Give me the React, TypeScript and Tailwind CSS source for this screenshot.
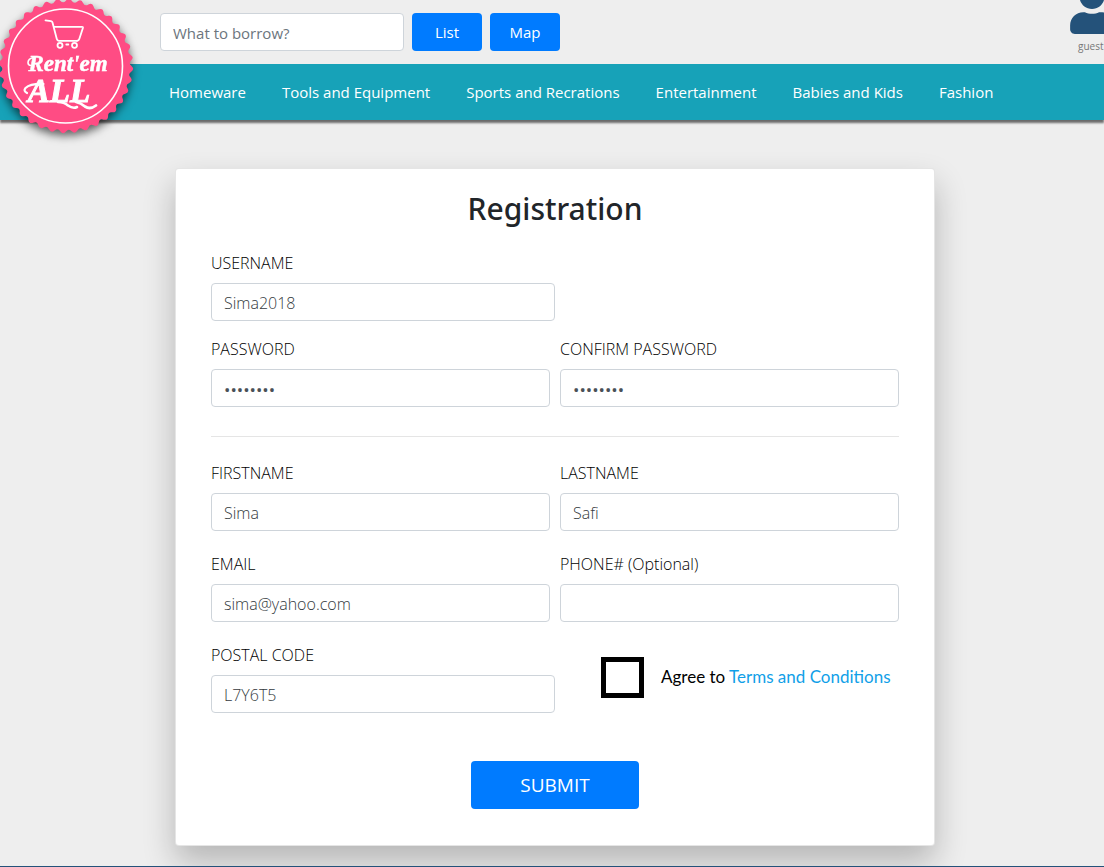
import { FaUser } from "react-icons/fa";

const categories = [
  "Homeware",
  "Tools and Equipment",
  "Sports and Recrations",
  "Entertainment",
  "Babies and Kids",
  "Fashion",
];

const CENTER = 66;

function sealPath(teeth: number, outer: number, inner: number) {
  const middle = (outer + inner) / 2;
  const point = (radius: number, angle: number) =>
    `${(CENTER + radius * Math.cos(angle)).toFixed(2)} ${(CENTER + radius * Math.sin(angle)).toFixed(2)}`;
  const step = (Math.PI * 2) / teeth;
  let d = `M${point(middle, 0)}`;
  for (let i = 0; i < teeth; i++) {
    const a = i * step;
    d += `Q${point(outer, a + step * 0.25)} ${point(middle, a + step * 0.5)}`;
    d += `Q${point(inner, a + step * 0.75)} ${point(middle, a + step)}`;
  }
  return d + "Z";
}

function Logo() {
  return (
    <svg
      viewBox="0 0 134 134"
      className="size-[134px] drop-shadow-[0_4px_4px_rgba(0,0,0,0.6)]"
      role="img"
      aria-label="Rent'em ALL"
    >
      <path d={sealPath(36, 69, 62)} fill="#ff4c84" />
      <circle cx="65.5" cy="66" r="57" fill="none" stroke="#fff" strokeWidth="1.6" />
      <g fill="none" stroke="#fff" strokeWidth="1.8" strokeLinecap="round" strokeLinejoin="round">
        <path d="M45.5 20.3l5.500 .9q1.200 .3 1.500 1.400l4.300 16.400q.5 1.800 2 1.800h18.200" />
        <path d="M54.300 26.800h27.700q1.200 0 .9 1.200l-3.600 11q-.5 1.800-2.300 1.800" />
        <circle cx="60" cy="45.300" r="2.500" />
        <circle cx="74.500" cy="45.300" r="2.500" />
        <path d="M66.300 44.500h2" />
      </g>
      <g
        fill="#fff"
        stroke="#fff"
        fontFamily="'Liberation Serif', serif"
        fontStyle="italic"
        fontWeight="700"
        textAnchor="middle"
      >
        <text x="68" y="71" fontSize="23" strokeWidth="0.5">
          Rent'em
        </text>
        <text x="59" y="102" fontSize="33" strokeWidth="1">
          ALL
        </text>
      </g>
      <g fill="none" stroke="#fff" strokeLinecap="round" strokeLinejoin="round">
        <path d="M34 57.500q-6 1-6 5q0 3 3 3" strokeWidth="1.6" />
        <path d="M27 93q-4-2-1.500-5q5-4.500 18-4" strokeWidth="2.200" />
        <path d="M58 102q6 0 10 3.500q5 3.500 9 1.500" strokeWidth="2.600" />
        <path d="M76 102q5 1 9 4.500q5 3.500 11-1" strokeWidth="2.800" />
      </g>
    </svg>
  );
}

type FieldProps = {
  id: string;
  label: string;
  value?: string;
  type?: "text" | "password";
  wide?: boolean;
};

function Field({ id, label, value = "", type = "text", wide = false }: FieldProps) {
  return (
    <div className={wide ? "" : "pr-[5px] even:pr-0 even:pl-[5px]"}>
      <label htmlFor={id} className="mb-2 block text-base leading-6 font-light text-black">
        {label}
      </label>
      <input
        id={id}
        type={type}
        defaultValue={value}
        className={`block h-[38px] w-full rounded border border-[#ced4da] bg-white px-3 pt-0.5 ${
          type === "password" ? "text-[17px] font-medium text-[#495057]" : "text-base font-light text-[#343a40]"
        }`}
      />
    </div>
  );
}

export default function App() {
  return (
    <div className="flex min-h-screen flex-col overflow-x-hidden bg-[#eee] font-['Open_Sans','Noto_Sans',sans-serif] text-[15px] text-[#212529]">
      <header className="relative">
        <div className="flex h-16 items-center pl-40">
          <form className="flex gap-2" onSubmit={(e) => e.preventDefault()}>
            <input
              type="search"
              aria-label="What to borrow?"
              placeholder="What to borrow?"
              className="h-[38px] w-[244px] rounded border border-[#ced4da] bg-white px-3 pt-0.5 placeholder:text-[#6c757d]"
            />
            <button type="submit" className="h-[38px] w-[70px] rounded bg-[#007bff] text-white">
              List
            </button>
            <button type="button" className="h-[38px] w-[70px] rounded bg-[#007bff] text-white">
              Map
            </button>
          </form>
          <a
            href="#account"
            className="-mt-4 -mr-2.5 ml-auto flex w-11 shrink-0 flex-col gap-1 self-start text-[#777]"
          >
            <FaUser className="h-[50px] w-11 text-[#24527a]" />
            <span className="pl-2 text-[10px] leading-4">guest</span>
          </a>
        </div>
        <nav className="flex h-14 items-center gap-9 bg-[#17a2b8] pl-[169px] whitespace-nowrap text-white shadow-[0_3px_2px_rgba(0,0,0,0.55)]">
          {categories.map((name) => (
            <a key={name} href="#category">
              {name}
            </a>
          ))}
        </nav>
        <a href="#home" className="absolute top-0 left-0">
          <Logo />
        </a>
      </header>

      <main className="grow pt-12 pb-5 pl-1.5">
        <form
          onSubmit={(e) => e.preventDefault()}
          className="mx-auto max-w-[760px] rounded border border-black/10 bg-white px-[35px] pt-5 pb-9 shadow-[0_16px_32px_rgba(0,0,0,0.24)]"
        >
          <h1 className="mb-[22px] text-center font-['Noto_Sans','Open_Sans',sans-serif] text-[30px] leading-10 font-medium">
            Registration
          </h1>

          <div className="mb-4 grid grid-cols-2">
            <Field id="username" label="USERNAME" value="Sima2018" wide />
          </div>
          <div className="grid grid-cols-2">
            <Field id="password" label="PASSWORD" value="sima2018" type="password" />
            <Field id="confirm" label="CONFIRM PASSWORD" value="sima2018" type="password" />
          </div>

          <hr className="mt-[29px] mb-6 border-black/10" />

          <div className="mb-[21px] grid grid-cols-2">
            <Field id="firstname" label="FIRSTNAME" value="Sima" />
            <Field id="lastname" label="LASTNAME" value="Safi" />
          </div>
          <div className="mb-[21px] grid grid-cols-2">
            <Field id="email" label="EMAIL" value="sima@yahoo.com" />
            <Field id="phone" label="PHONE# (Optional)" />
          </div>
          <div className="mb-12 grid grid-cols-2">
            <Field id="postal" label="POSTAL CODE" value="L7Y6T5" wide />
            <div className="flex items-center gap-[17px] pb-0.5 pl-[46px] font-['Lato',sans-serif] text-[17px] whitespace-nowrap text-black">
              <input
                id="agree"
                type="checkbox"
                className="h-[41px] w-[43px] shrink-0 appearance-none border-[5px] border-black bg-white checked:bg-black"
              />
              <label htmlFor="agree">
                Agree to{" "}
                <a href="#terms" className="text-[#119fe8]">
                  Terms and Conditions
                </a>
              </label>
            </div>
          </div>

          <button
            type="submit"
            className="mx-auto block h-12 w-[168px] rounded bg-[#007bff] text-[19px] text-white"
          >
            SUBMIT
          </button>
        </form>
      </main>
      <footer className="h-px bg-[#24527a]" />
    </div>
  );
}
